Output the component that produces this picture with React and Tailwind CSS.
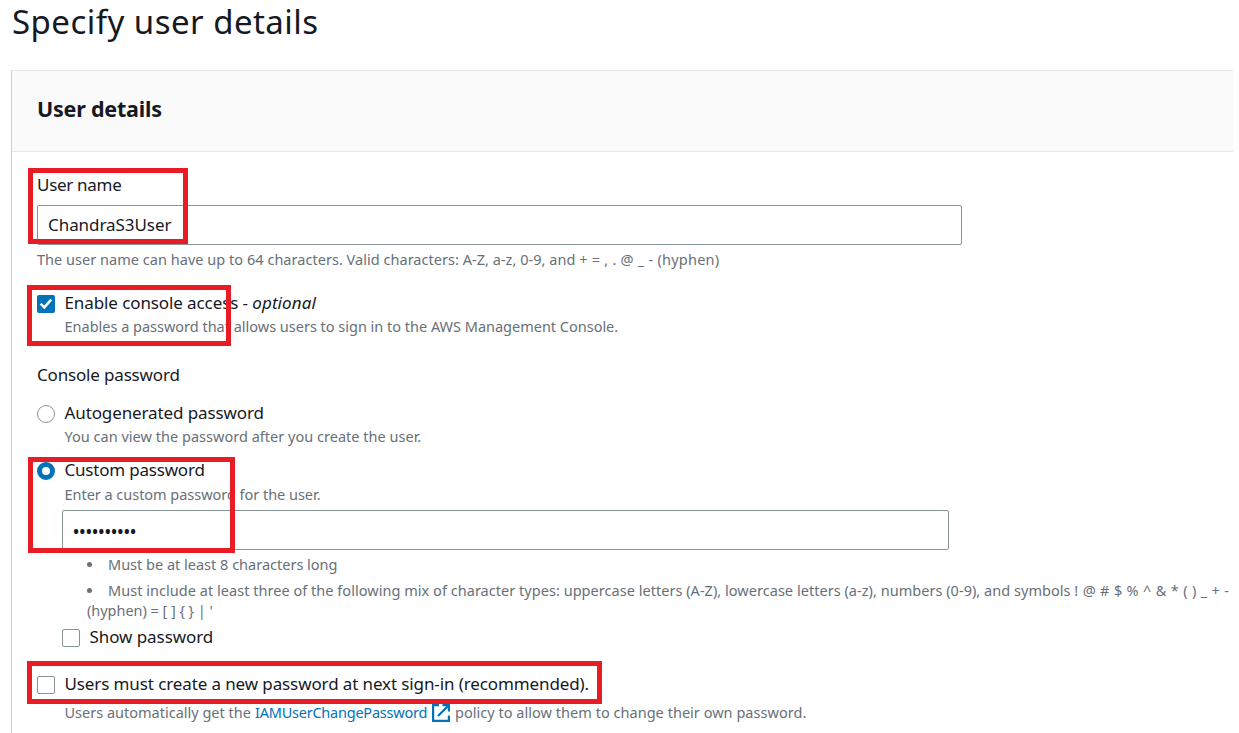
function Check({ checked }) {
  return checked ? (
    <span className="mt-0.5 flex h-[18px] w-[18px] shrink-0 items-center justify-center rounded-[2px] bg-[#0073bb]">
      <svg width="14" height="14" viewBox="0 0 14 14" fill="none" stroke="#fff" strokeWidth="2.4">
        <path d="M1.6 6.6 5.3 10.4 12.2 2.6" />
      </svg>
    </span>
  ) : (
    <span className="mt-0.5 h-[18px] w-[18px] shrink-0 rounded-[2px] border border-[#879596] bg-white" />
  );
}

function Radio({ checked }) {
  return checked ? (
    <span className="mt-0.5 h-[18px] w-[18px] shrink-0 rounded-full border-[5px] border-[#0073bb] bg-white" />
  ) : (
    <span className="mt-0.5 h-[18px] w-[18px] shrink-0 rounded-full border border-[#879596] bg-white" />
  );
}

function Option({ control, className, children }) {
  return (
    <div className={"flex h-6 items-center gap-[9.5px] " + className}>
      {control}
      <span>{children}</span>
    </div>
  );
}

const hint = "h-5 text-[14.5px] leading-5 text-[#687078] ";

export default function App() {
  return (
    <div className="relative h-[733px] w-[1239px] overflow-hidden whitespace-nowrap bg-white font-['Noto_Sans',sans-serif] text-[17px] leading-6 text-[#16191f]">
      <h1 className="h-[70px] pl-3 text-[33px] leading-[44px] tracking-[0.46px]">Specify user details</h1>
      <section className="ml-[11px] h-[680px] w-[1222px] border-l border-t border-l-[#c9cdce] border-t-[#e6e8e8]">
        <header className="flex h-[81px] items-center border-b border-[#e6e8e8] bg-[#fafafa] pl-[25px]">
          <h2 className="-mt-1 text-[21.5px] font-bold leading-8 tracking-[-0.22px]">User details</h2>
        </header>
        <div className="pl-[25px] pt-[21px]">
          <div className="tracking-[-0.3px]">User name</div>
          <div className="mt-2 flex h-10 w-[925px] items-center rounded-[2px] border border-[#879596] pl-2.5 tracking-[-0.06px]">
            ChandraS3User
          </div>
          <p className={hint + "mt-1 tracking-[0.03px]"}>
            The user name can have up to 64 characters. Valid characters: A-Z, a-z, 0-9, and{" "}
            <span className="tracking-[0.24px]">+ = , . @ _ - (hyphen)</span>
          </p>

          <Option className="mt-[22px] tracking-[-0.1px]" control={<Check checked />}>
            Enable console access - <i className="tracking-[0.1px]">optional</i>
          </Option>
          <p className={hint + "mt-px pl-[27.5px] tracking-[-0.01px]"}>
            Enables a password that allows users to sign in to the AWS Management Console.
          </p>

          <div className="mt-[27px] tracking-[-0.17px]">Console password</div>
          <Option className="mt-3.5 tracking-[-0.11px]" control={<Radio />}>
            Autogenerated password
          </Option>
          <p className={hint + "mt-px pl-[27.5px] tracking-[0.02px]"}>
            You can view the password after you create the user.
          </p>
          <Option className="mt-3 tracking-[-0.2px]" control={<Radio checked />}>
            Custom password
          </Option>
          <p className={hint + "mt-0.5 pl-[27.5px] tracking-[-0.03px]"}>Enter a custom password for the user.</p>

          <div className="pl-[25px]">
            <div className="mt-1.5 flex h-10 w-[887px] items-center rounded-[2px] border border-[#879596] pl-[9.5px] pt-1 text-[19px] tracking-[-0.81px]">
              ••••••••••
            </div>
            <ul className="mt-1 pl-[25px]">
              <li className={hint + "flex items-center"}>
                <span className="mr-4 h-[5px] w-[5px] rounded-full bg-[#687078]" />
                <span>Must be at least 8 characters long</span>
              </li>
              <li className={hint + "mt-1.5 flex items-center"}>
                <span className="mr-4 h-[5px] w-[5px] rounded-full bg-[#687078]" />
                <span className="tracking-[0.035px]">
                  Must include at least three of the following mix of character types: uppercase letters (A-Z), lowercase letters (a-z), numbers (0-9), and symbols{" "}
                  <span className="tracking-[0.32px]">! @ # $ % ^ &amp; * ( ) _ + -</span>
                </span>
              </li>
              <li className={hint + "tracking-[-0.04px]"}>(hyphen) = [ ] {"{ }"} | '</li>
            </ul>
            <Option className="mt-[5px] tracking-[-0.07px]" control={<Check />}>
              Show password
            </Option>
          </div>

          <Option className="mt-[23px] tracking-[-0.11px]" control={<Check />}>
            Users must create a new password at next sign-in (recommended).
          </Option>
          <p className={hint + "mt-1.5 flex pl-[27.5px]"}>
            <span className="w-[190.5px]">Users automatically get the</span>
            <a className="w-[177px] tracking-[-0.23px] text-[#0073bb]">IAMUserChangePassword</a>
            <svg className="mr-[5px] mt-0.5" width="18" height="18" viewBox="0 0 18 18" fill="none" stroke="#0073bb" strokeWidth="2.2">
              <path d="M7 1.1H1.1v15.8h15.8V11.5M10.5 1.1h6.4v6.4M16.5 1.5 6 12" />
            </svg>
            <span className="tracking-[0.03px]">policy to allow them to change their own password.</span>
          </p>
        </div>
      </section>

      <div className="absolute left-[28px] top-[168px] h-[76px] w-[160px] border-[5px] border-[#e81c24]" />
      <div className="absolute left-[27px] top-[285px] h-[61px] w-[204px] border-[5px] border-[#e81c24]" />
      <div className="absolute left-[28px] top-[457px] h-[96px] w-[207px] border-[5px] border-[#e81c24]" />
      <div className="absolute left-[27px] top-[661px] h-[43px] w-[575px] border-[5px] border-[#e81c24]" />
    </div>
  );
}
